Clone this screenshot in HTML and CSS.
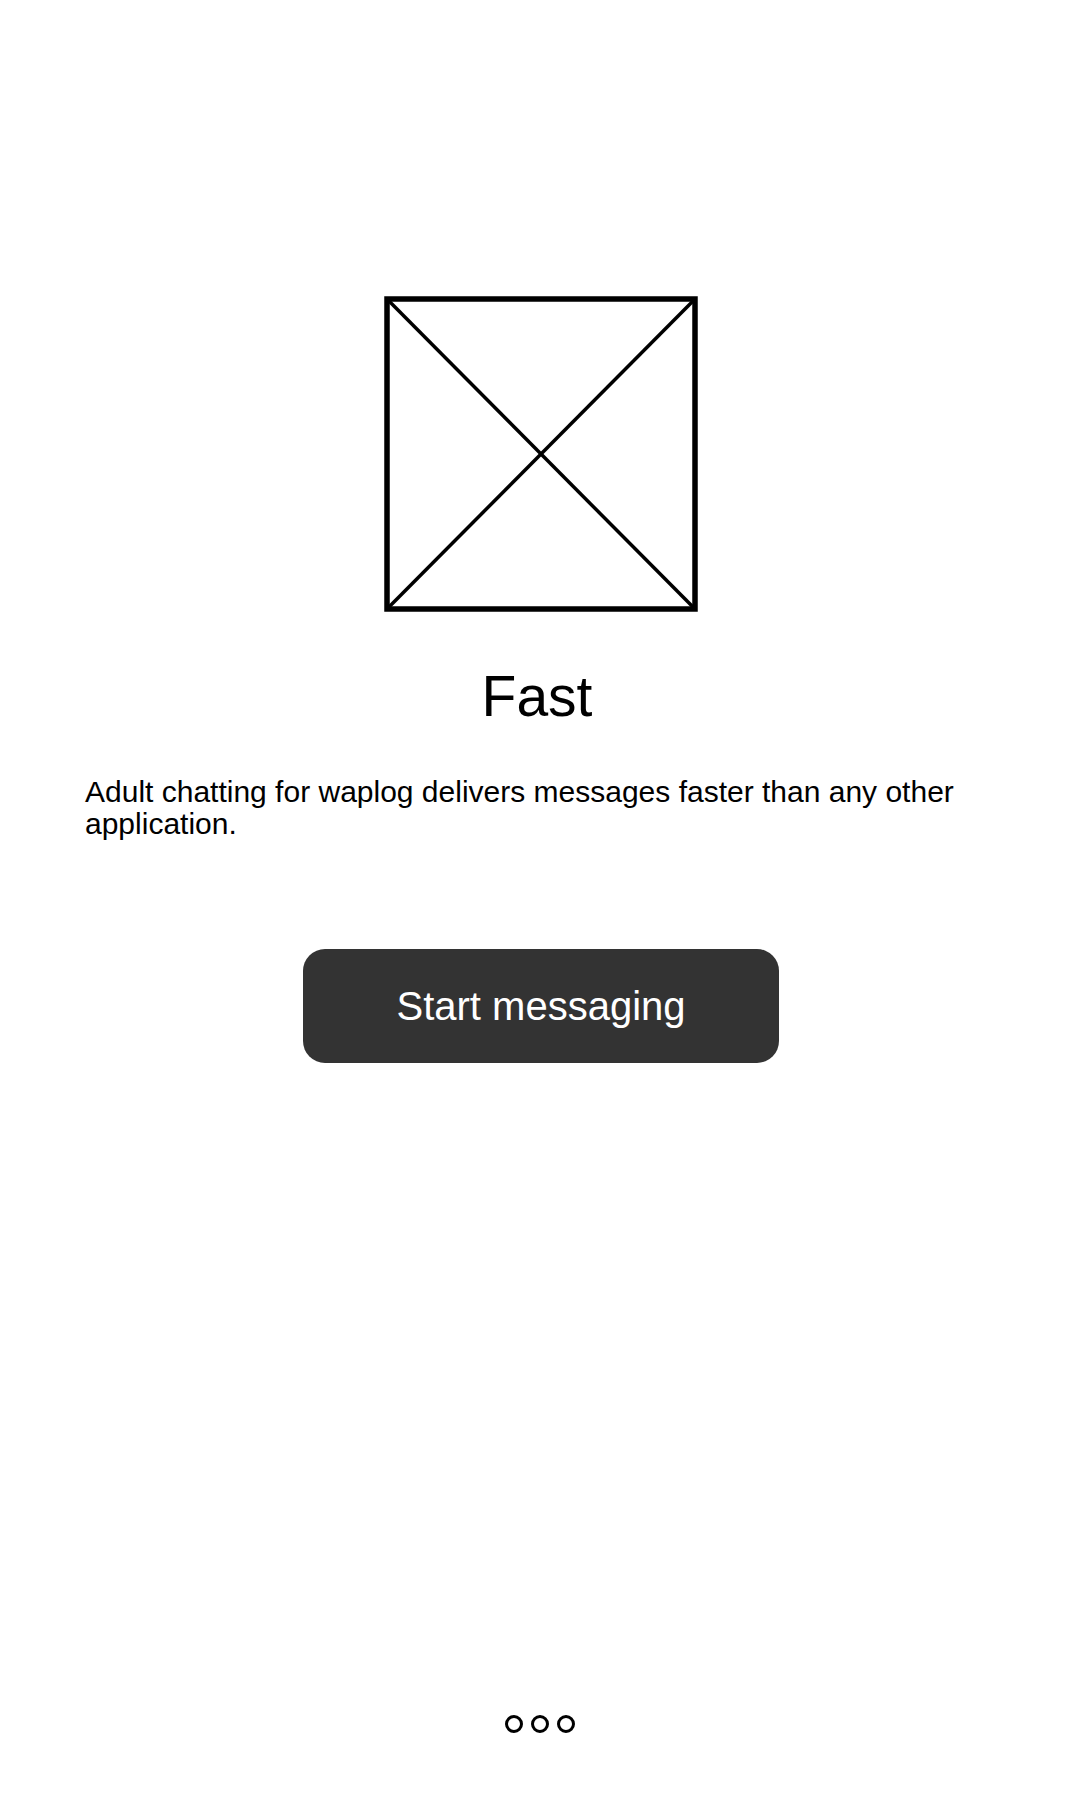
FILE: index.html
```html
<!DOCTYPE html>
<html lang="en">
<head>
<meta charset="utf-8">
<title>Fast</title>
<link rel="stylesheet" href="styles.css">
</head>
<body>
<main class="screen">
  <div class="placeholder">
    <svg class="placeholder-svg" viewBox="0 0 314 316" width="314" height="316" aria-hidden="true">
      <rect x="3" y="3" width="308" height="310" fill="none" stroke="#000" stroke-width="5.5"/>
      <line x1="3" y1="3" x2="311" y2="313" stroke="#000" stroke-width="3.5"/>
      <line x1="311" y1="3" x2="3" y2="313" stroke="#000" stroke-width="3.5"/>
    </svg>
  </div>
  <h1 class="title">Fast</h1>
  <p class="desc">Adult chatting for waplog delivers messages faster than any other application.</p>
  <button class="cta" type="button">Start messaging</button>
  <div class="dots">
    <span class="dot"></span>
    <span class="dot"></span>
    <span class="dot"></span>
  </div>
</main>
</body>
</html>
```
FILE: styles.css
```css
html, body {
  margin: 0;
  padding: 0;
  background: #ffffff;
}

body {
  font-family: "Liberation Sans", Arial, sans-serif;
  color: #000000;
}

.screen {
  min-height: 1800px;
  box-sizing: border-box;
  display: flex;
  flex-direction: column;
  align-items: center;
  padding: 296px 0 67px;
}

.placeholder {
  width: 314px;
  height: 316px;
  margin-left: 2px;
}

.placeholder-svg {
  display: block;
}

.title {
  margin: 54px 0 0;
  font-size: 57px;
  line-height: 60px;
  font-weight: 400;
  text-align: center;
  margin-right: 6px;
}

.desc {
  align-self: stretch;
  margin: 50px 0 0;
  padding: 0 80px 0 85px;
  font-size: 30px;
  line-height: 32px;
}

.cta {
  margin-top: 109px;
  width: 476px;
  height: 114px;
  margin-left: 2px;
  border: none;
  border-radius: 22px;
  background: #333333;
  color: #ffffff;
  font-family: "Liberation Sans", Arial, sans-serif;
  font-size: 40px;
  display: flex;
  align-items: center;
  justify-content: center;
  padding: 0;
}

.dots {
  margin-top: auto;
  display: flex;
  gap: 8px;
}

.dot {
  width: 18px;
  height: 18px;
  box-sizing: border-box;
  border: 3px solid #000000;
  border-radius: 50%;
}
```
